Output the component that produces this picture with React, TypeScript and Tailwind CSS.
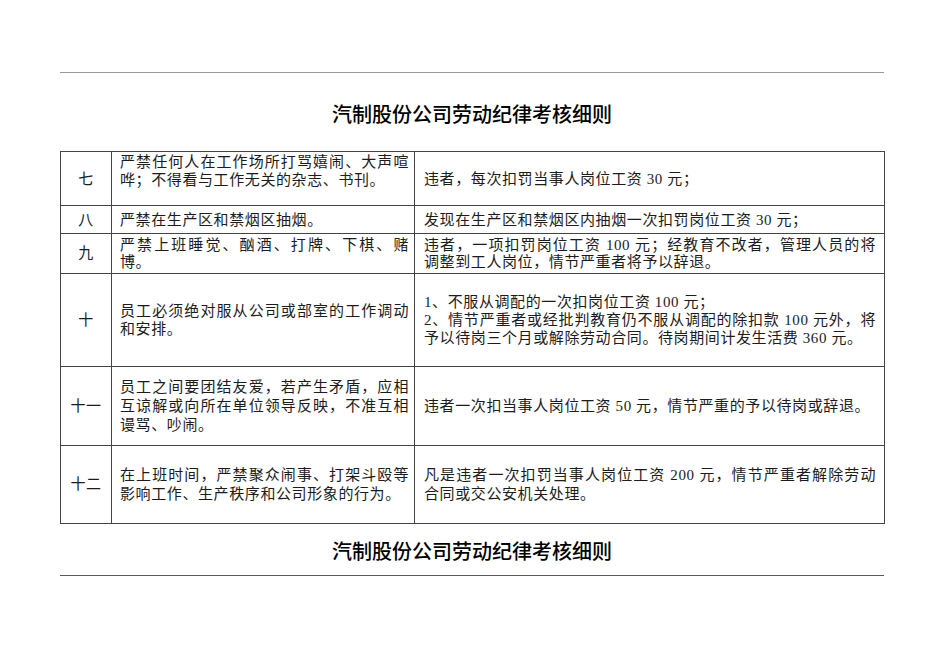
const BODY_FONT = "font-['Liberation_Serif','Noto_Sans_CJK_SC',serif]";
const TITLE_FONT = "font-['Noto_Sans_CJK_SC',sans-serif]";

type Line = { text: string; full?: boolean };

type Row = {
  no: string;
  height: string;
  leading: string;
  rule: Line[];
  ruleTop?: boolean;
  penalty: Line[];
};

const ROWS: Row[] = [
  {
    no: '七',
    height: 'h-[54px]',
    leading: 'leading-[18px]',
    ruleTop: true,
    rule: [
      { text: '严禁任何人在工作场所打骂嬉闹、大声喧', full: true },
      { text: '哗；不得看与工作无关的杂志、书刊。' },
    ],
    penalty: [{ text: '违者，每次扣罚当事人岗位工资 30 元；' }],
  },
  {
    no: '八',
    height: 'h-[28px]',
    leading: 'leading-[18px]',
    rule: [{ text: '严禁在生产区和禁烟区抽烟。' }],
    penalty: [{ text: '发现在生产区和禁烟区内抽烟一次扣罚岗位工资 30 元；' }],
  },
  {
    no: '九',
    height: 'h-[40px]',
    leading: 'leading-[17px]',
    rule: [
      { text: '严禁上班睡觉、酗酒、打牌、下棋、赌', full: true },
      { text: '博。' },
    ],
    penalty: [
      { text: '违者，一项扣罚岗位工资 100 元；经教育不改者，管理人员的将', full: true },
      { text: '调整到工人岗位，情节严重者将予以辞退。' },
    ],
  },
  {
    no: '十',
    height: 'h-[93px]',
    leading: 'leading-[18px]',
    rule: [
      { text: '员工必须绝对服从公司或部室的工作调动', full: true },
      { text: '和安排。' },
    ],
    penalty: [
      { text: '1、不服从调配的一次扣岗位工资 100 元；' },
      { text: '2、情节严重者或经批判教育仍不服从调配的除扣款 100 元外，将', full: true },
      { text: '予以待岗三个月或解除劳动合同。待岗期间计发生活费 360 元。' },
    ],
  },
  {
    no: '十一',
    height: 'h-[79px]',
    leading: 'leading-[19px]',
    rule: [
      { text: '员工之间要团结友爱，若产生矛盾，应相', full: true },
      { text: '互谅解或向所在单位领导反映，不准互相', full: true },
      { text: '谩骂、吵闹。' },
    ],
    penalty: [{ text: '违者一次扣当事人岗位工资 50 元，情节严重的予以待岗或辞退。' }],
  },
  {
    no: '十二',
    height: 'h-[78px]',
    leading: 'leading-[19px]',
    rule: [
      { text: '在上班时间，严禁聚众闹事、打架斗殴等', full: true },
      { text: '影响工作、生产秩序和公司形象的行为。' },
    ],
    penalty: [
      { text: '凡是违者一次扣罚当事人岗位工资 200 元，情节严重者解除劳动', full: true },
      { text: '合同或交公安机关处理。' },
    ],
  },
];

function Lines({ lines }: { lines: Line[] }) {
  return (
    <>
      {lines.map((line, i) => (
        <span
          key={i}
          className={
            line.full
              ? 'block whitespace-nowrap text-justify [text-align-last:justify]'
              : 'block whitespace-nowrap text-left'
          }
        >
          {line.text}
        </span>
      ))}
    </>
  );
}

function Title() {
  return (
    <h1 className={`${TITLE_FONT} text-center text-[20px] leading-[28px] font-medium text-black`}>
      汽制股份公司劳动纪律考核细则
    </h1>
  );
}

export default function App() {
  return (
    <div className={`min-h-[672px] w-[950px] bg-white ${BODY_FONT}`}>
      <div className="ml-[60px] w-[824px] pt-[72px]">
        <div className="h-px bg-[#9a9a9a]" />
        <div className="mt-[27px] mb-[23px]">
          <Title />
        </div>

        <table className="w-[824px] table-fixed border-collapse text-[15px] tracking-[0.6px] text-[#1c1c1c]">
          <colgroup>
            <col className="w-[51px]" />
            <col className="w-[303px]" />
            <col className="w-[470px]" />
          </colgroup>
          <tbody>
            {ROWS.map((row) => (
              <tr key={row.no} className={`${row.height} ${row.leading}`}>
                <td className="border border-[#444] p-0 text-center align-middle">{row.no}</td>
                <td
                  className={`border border-[#444] pl-[8px] pr-[5px] ${
                    row.ruleTop ? 'align-top pt-[1px]' : 'align-middle py-0'
                  }`}
                >
                  <Lines lines={row.rule} />
                </td>
                <td className="border border-[#444] pl-[9px] pr-[8px] py-0 align-middle">
                  <Lines lines={row.penalty} />
                </td>
              </tr>
            ))}
          </tbody>
        </table>

        <div className="mt-[13px] mb-[10px]">
          <Title />
        </div>
        <div className="h-px bg-[#5a5a5a]" />
      </div>
    </div>
  );
}
